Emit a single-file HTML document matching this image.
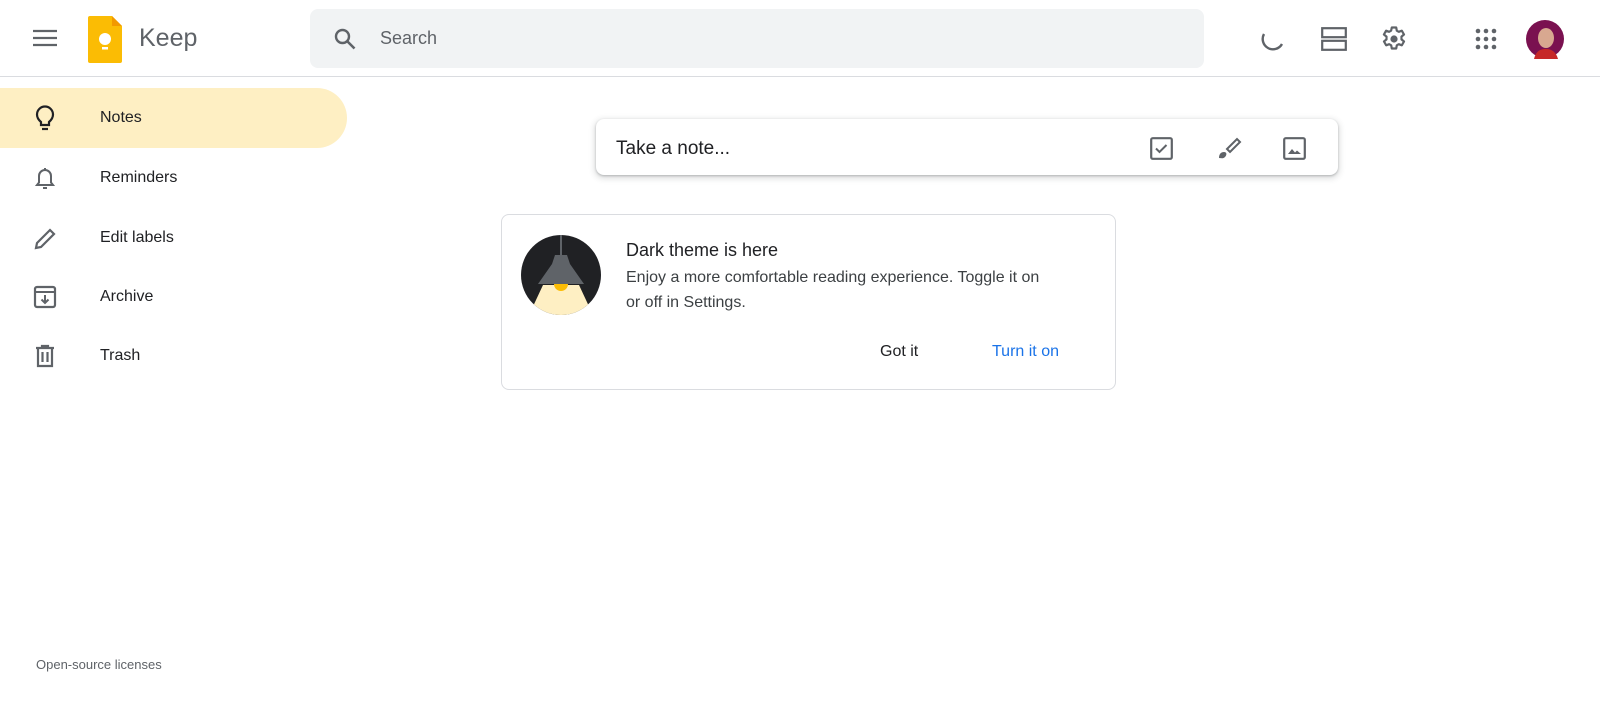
<!DOCTYPE html>
<html><head><meta charset="utf-8"><style>
*{box-sizing:border-box;margin:0;padding:0}
body{width:1600px;height:702px;background:#fff;font-family:"Liberation Sans",sans-serif;color:#202124;position:relative;overflow:hidden}
.abs{position:absolute}
svg{display:block}
.nav{position:absolute;left:0;width:347px;height:60px;display:flex;align-items:center;font-size:16px;color:#202124}
.nav svg{position:absolute;left:33px}
.nav span{position:absolute;left:100px}
</style></head><body>
<div class="abs" style="left:0;top:76px;width:1600px;height:1px;background:#dadce0"></div>
<svg class="abs" style="left:33px;top:29px" width="24" height="18" viewBox="0 0 24 18"><path d="M0 2h24M0 9h24M0 16h24" stroke="#5f6368" stroke-width="2.2"/></svg>
<svg class="abs" style="left:88px;top:16px" width="34" height="47" viewBox="0 0 34 47"><path d="M2 0h22l10 10v35a2 2 0 0 1-2 2H2a2 2 0 0 1-2-2V2a2 2 0 0 1 2-2z" fill="#fbbc04"/><path d="M24 0l10 10H24z" fill="#f29900"/><circle cx="17" cy="23" r="6" fill="#fff"/><rect x="14" y="31" width="6" height="2.5" fill="#fff"/></svg>
<div class="abs" style="left:139px;top:24px;font-size:25px;color:#5f6368">Keep</div>
<div class="abs" style="left:310px;top:9px;width:894px;height:59px;background:#f1f3f4;border-radius:8px"></div>
<svg class="abs" style="left:333px;top:27px" width="24" height="24" viewBox="0 0 24 24"><circle cx="9.5" cy="9.5" r="6.5" fill="none" stroke="#5f6368" stroke-width="2.4"/><path d="M14.5 14.5l7 7" stroke="#5f6368" stroke-width="2.6"/></svg>
<div class="abs" style="left:380px;top:28px;font-size:18px;color:#5f6368">Search</div>
<svg class="abs" style="left:1258px;top:28px" width="28" height="24" viewBox="0 0 28 24"><path d="M6 6a9 9 0 0 0 18 10" fill="none" stroke="#5f6368" stroke-width="2.4"/></svg>
<svg class="abs" style="left:1321px;top:27px" width="26" height="24" viewBox="0 0 26 24"><rect x="1.2" y="1.2" width="23.6" height="9" fill="none" stroke="#5f6368" stroke-width="2.2"/><rect x="1.2" y="13.8" width="23.6" height="9" fill="none" stroke="#5f6368" stroke-width="2.2"/></svg>
<svg class="abs" style="left:1380px;top:25px" width="28" height="28" viewBox="0 0 28 28"><g fill="none" stroke="#5f6368" stroke-width="2.2" stroke-linejoin="round"><path d="M11.8 2.5h4.4l.6 3.2 2 1.1 3-1.1 2.2 3.8-2.5 2.1v2.8l2.5 2.1-2.2 3.8-3-1.1-2 1.1-.6 3.2h-4.4l-.6-3.2-2-1.1-3 1.1-2.2-3.8 2.5-2.1v-2.8L3.9 9.5l2.2-3.8 3 1.1 2-1.1z"/></g><circle cx="14" cy="14" r="3.6" fill="#5f6368"/></svg>
<svg class="abs" style="left:1475px;top:28px" width="22" height="22" viewBox="0 0 22 22" fill="#5f6368"><circle cx="3" cy="3" r="2.3"/><circle cx="11" cy="3" r="2.3"/><circle cx="19" cy="3" r="2.3"/><circle cx="3" cy="11" r="2.3"/><circle cx="11" cy="11" r="2.3"/><circle cx="19" cy="11" r="2.3"/><circle cx="3" cy="19" r="2.3"/><circle cx="11" cy="19" r="2.3"/><circle cx="19" cy="19" r="2.3"/></svg>
<svg class="abs" style="left:1525px;top:19px" width="40" height="40" viewBox="0 0 40 40"><circle cx="20" cy="20" r="19" fill="#7a1150"/><ellipse cx="21" cy="19" rx="8" ry="10" fill="#d8a890"/><path d="M9 40c2-8 6-10 12-10s10 3 12 10z" fill="#c62828"/></svg>

<div class="abs" style="left:0;top:88px;width:347px;height:60px;background:#feefc3;border-radius:0 30px 30px 0"></div>
<div class="nav" style="top:88px"><svg width="24" height="26" viewBox="0 0 24 26"><path d="M8 17c-2-1.7-4-3.8-4-7.5a8 8 0 0 1 16 0c0 3.7-2 5.8-4 7.5v3H8z" fill="none" stroke="#202124" stroke-width="2.2"/><path d="M9 24h6" stroke="#202124" stroke-width="2.2"/></svg><span>Notes</span></div>
<div class="nav" style="top:148px"><svg width="24" height="26" viewBox="0 0 24 26"><path d="M4 20h16l-2-2.5V11a6 6 0 0 0-12 0v6.5z" fill="none" stroke="#5f6368" stroke-width="2"/><path d="M12 3v2M10 23h4" stroke="#5f6368" stroke-width="2"/></svg><span>Reminders</span></div>
<div class="nav" style="top:208px"><svg width="24" height="26" viewBox="0 0 24 26"><path d="M3 23l1-5L17 5l4 4L8 22z" fill="none" stroke="#5f6368" stroke-width="2.2"/></svg><span>Edit labels</span></div>
<div class="nav" style="top:267px"><svg width="24" height="26" viewBox="0 0 24 26"><rect x="2" y="3" width="20" height="20" rx="2" fill="none" stroke="#5f6368" stroke-width="2.2"/><path d="M2 8h20M12 11v8M8.5 15.5L12 19l3.5-3.5" fill="none" stroke="#5f6368" stroke-width="2"/></svg><span>Archive</span></div>
<div class="nav" style="top:326px"><svg width="24" height="26" viewBox="0 0 24 26"><path d="M3 5h18M9 5V3h6v2M5 5v18h14V5M9.5 9v10M14.5 9v10" fill="none" stroke="#5f6368" stroke-width="2.2"/></svg><span>Trash</span></div>
<div class="abs" style="left:36px;top:657px;font-size:13px;color:#5f6368">Open-source licenses</div>

<div class="abs" style="left:596px;top:119px;width:742px;height:56px;border-radius:8px;box-shadow:0 1px 2px rgba(60,64,67,.3),0 2px 6px 2px rgba(60,64,67,.15)"></div>
<div class="abs" style="left:616px;top:138px;font-size:19px;color:#202124">Take a note...</div>
<svg class="abs" style="left:1150px;top:137px" width="23" height="23" viewBox="0 0 23 23"><rect x="1.2" y="1.2" width="20.6" height="20.6" rx="1.5" fill="none" stroke="#5f6368" stroke-width="2.2"/><path d="M6 11.5l3.5 3.5 7-7" fill="none" stroke="#5f6368" stroke-width="2"/></svg>
<svg class="abs" style="left:1216px;top:137px" width="26" height="24" viewBox="0 0 26 24"><path d="M11 12l10-10 3 3-10 10z" fill="none" stroke="#5f6368" stroke-width="2"/><path d="M3 21c0-4 2-6 5-6s3 3 1 5-4 1-6 1z" fill="#5f6368"/></svg>
<svg class="abs" style="left:1283px;top:137px" width="23" height="23" viewBox="0 0 23 23"><rect x="1.2" y="1.2" width="20.6" height="20.6" rx="1.5" fill="none" stroke="#5f6368" stroke-width="2.2"/><path d="M5 17l4-5 3 3.5 2-2 4 3.5z" fill="#5f6368"/></svg>

<div class="abs" style="left:501px;top:214px;width:615px;height:176px;border:1px solid #dadce0;border-radius:8px"></div>
<svg class="abs" style="left:521px;top:235px" width="80" height="80" viewBox="0 0 80 80"><defs><clipPath id="c"><circle cx="40" cy="40" r="40"/></clipPath></defs><g clip-path="url(#c)"><rect width="80" height="80" fill="#202124"/><path d="M8 80L22 50h36l14 30z" fill="#feefc3"/><rect x="39" y="0" width="2" height="20" fill="#5f6368"/><path d="M34 20h12l3 9 14 20H17l14-20z" fill="#5f6368"/><path d="M33 49a7 7 0 0 0 14 0z" fill="#fbbc04"/></g></svg>
<div class="abs" style="left:626px;top:240px;font-size:18px;color:#202124">Dark theme is here</div>
<div class="abs" style="left:626px;top:265px;font-size:16px;color:#3c4043;line-height:25px;white-space:nowrap">Enjoy a more comfortable reading experience. Toggle it on<br>or off in Settings.</div>
<div class="abs" style="left:880px;top:343px;font-size:16px;color:#202124">Got it</div>
<div class="abs" style="left:992px;top:343px;font-size:16px;color:#1a73e8">Turn it on</div>
</body></html>
